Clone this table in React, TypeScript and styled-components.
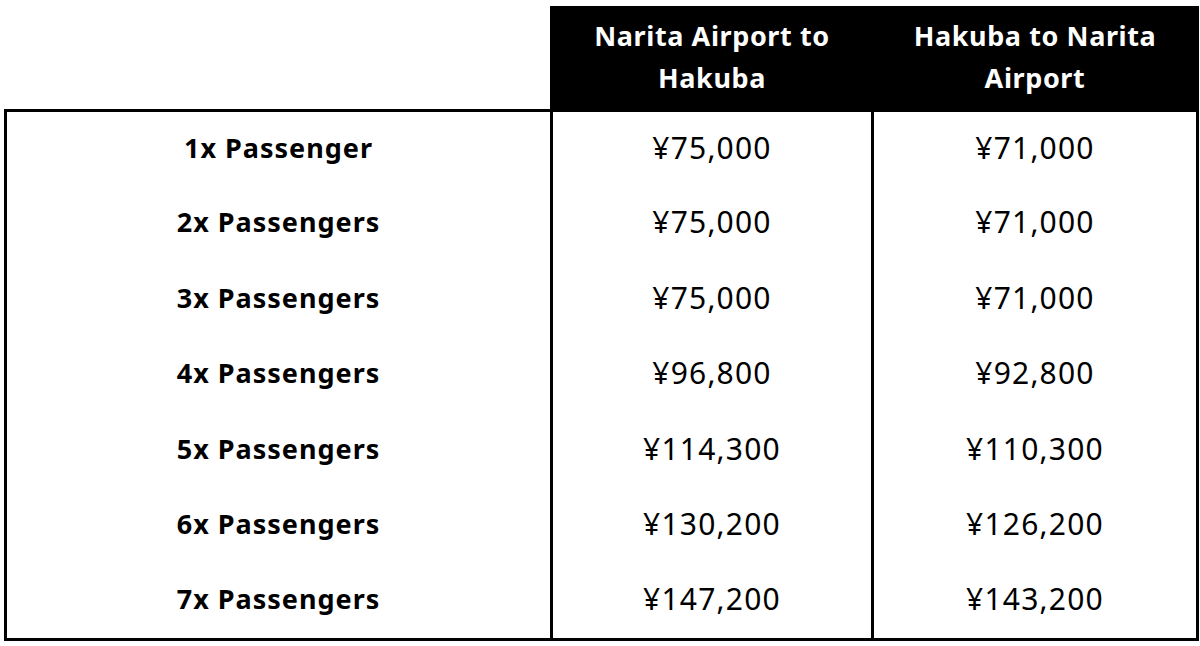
import styled, { createGlobalStyle } from "styled-components";

const GlobalStyle = createGlobalStyle`
  html, body {
    margin: 0;
    padding: 0;
    background: #fff;
  }
  body {
    font-family: "Noto Sans", "Open Sans", sans-serif;
    color: #000;
  }
`;

const Page = styled.div`
  padding: 6px 4px 0 4px;
`;

const PriceTable = styled.table`
  width: 1192px;
  table-layout: fixed;
  border-collapse: collapse;
`;

const HeadCell = styled.th<{ $blank?: boolean }>`
  height: 96px;
  padding: 0 18px 4px;
  background: ${(p) => (p.$blank ? "transparent" : "#000")};
  color: #fff;
  font-size: 27px;
  font-weight: 700;
  letter-spacing: 0.6px;
  line-height: 42px;
  text-align: center;
  vertical-align: middle;
  border: ${(p) => (p.$blank ? "none" : "3px solid #000")};
`;

const Row = styled.tr`
  height: 75.5px;
`;

const Cell = styled.td<{ $label?: boolean }>`
  padding: 0 0 4px;
  font-size: ${(p) => (p.$label ? "27px" : "30px")};
  font-weight: ${(p) => (p.$label ? 700 : 400)};
  letter-spacing: ${(p) => (p.$label ? "1px" : "1.2px")};
  text-align: center;
  vertical-align: middle;
  border-left: 3.5px solid #000;
  border-right: 3.5px solid #000;
`;

const Body = styled.tbody`
  border: 3.5px solid #000;
`;

const rows = [
  { label: "1x Passenger", to: "¥75,000", from: "¥71,000" },
  { label: "2x Passengers", to: "¥75,000", from: "¥71,000" },
  { label: "3x Passengers", to: "¥75,000", from: "¥71,000" },
  { label: "4x Passengers", to: "¥96,800", from: "¥92,800" },
  { label: "5x Passengers", to: "¥114,300", from: "¥110,300" },
  { label: "6x Passengers", to: "¥130,200", from: "¥126,200" },
  { label: "7x Passengers", to: "¥147,200", from: "¥143,200" },
];

const App = () => {
  return (
    <Page>
      <GlobalStyle />
      <PriceTable>
        <colgroup>
          <col style={{ width: 546 }} />
          <col style={{ width: 321 }} />
          <col style={{ width: 325 }} />
        </colgroup>
        <thead>
          <tr>
            <HeadCell $blank />
            <HeadCell>Narita Airport to Hakuba</HeadCell>
            <HeadCell>Hakuba to Narita Airport</HeadCell>
          </tr>
        </thead>
        <Body>
          {rows.map((r) => (
            <Row key={r.label}>
              <Cell $label>{r.label}</Cell>
              <Cell>{r.to}</Cell>
              <Cell>{r.from}</Cell>
            </Row>
          ))}
        </Body>
      </PriceTable>
    </Page>
  );
};

export default App;
